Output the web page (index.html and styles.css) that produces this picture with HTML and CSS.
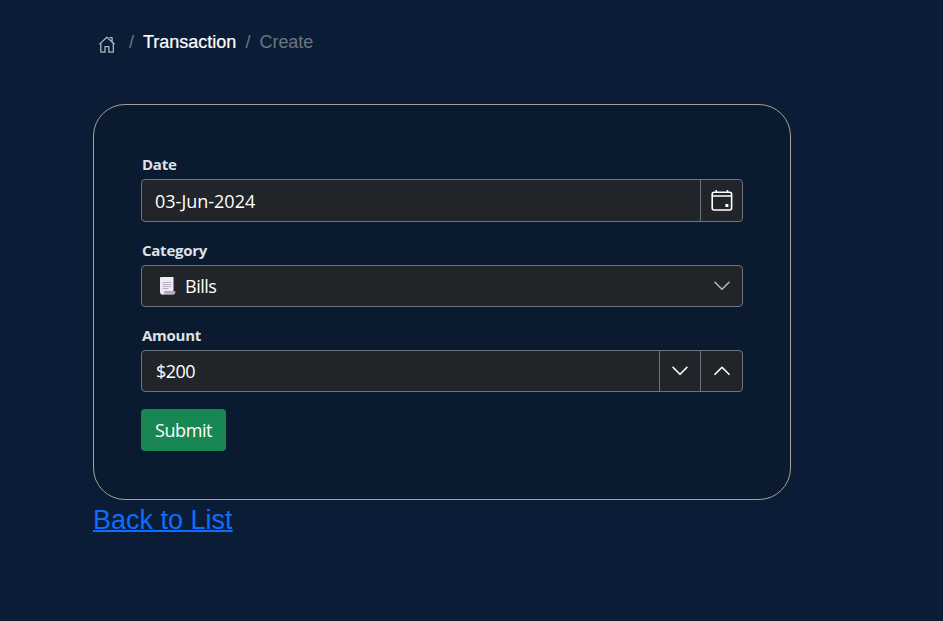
FILE: index.html
```html
<!DOCTYPE html>
<html lang="en">
<head>
<meta charset="utf-8">
<title>Create Transaction</title>
<link rel="stylesheet" href="styles.css">
</head>
<body>
<main class="page">
  <nav class="breadcrumb">
    <a class="home"><svg width="16" height="17" viewBox="0 0 16 17"><path d="M.8 7.9 7.9 1.2l7.3 6.7M1.8 7v9.2H6v-5.6h3.9v5.6h4.4V7M10.9 1.7h2.2v3.5" /></svg></a>
    <span class="slash">/</span>
    <span class="parent">Transaction</span>
    <span class="slash second">/</span>
    <span class="current">Create</span>
  </nav>
  <form class="card">
    <div class="field first">
      <label class="label">Date</label>
      <div class="control">
        <span class="value date">03-Jun-2024</span>
        <span class="addon"><svg width="22" height="22" viewBox="0 0 22 22"><rect x="1.2" y="2.2" width="19.4" height="17.8" rx="2"/><path d="M1.5 6h19M5.3.7v1.5M16.5.7v1.5"/><rect class="dot" x="14.4" y="14" width="3" height="3" rx=".5"/></svg></span>
      </div>
    </div>
    <div class="field">
      <label class="label">Category</label>
      <div class="control">
        <svg class="scroll" width="18" height="20" viewBox="0 0 18 20"><path fill="#f0e9f7" d="M1.5 1h13v14.5H5.2v3.2H4C2.2 18.7 1 17.6 1 16V2z"/><path fill="#b9adc5" d="M5 15.2h11.5c0 2.2-.9 3.5-2.7 3.5H4c1.3-.7 1-2 1-3.5z"/><path stroke="#b9afc4" d="M4 6.5h8M4 8.5h8M4 10.5h8M4 12.5h5"/></svg>
        <span class="value bills">Bills</span>
        <span class="addon plain muted"><svg width="16" height="10" viewBox="0 0 16 10"><path d="m1 1.3 7 7 7-7"/></svg></span>
      </div>
    </div>
    <div class="field">
      <label class="label amount-label">Amount</label>
      <div class="control">
        <span class="value amount">$200</span>
        <span class="addon narrow"><svg width="16" height="10" viewBox="0 0 16 10"><path d="m1 1.3 7 7 7-7"/></svg></span>
        <span class="addon"><svg width="16" height="10" viewBox="0 0 16 10"><path d="m1 8.3 7-7 7 7"/></svg></span>
      </div>
    </div>
    <button class="submit" type="button"><span>Submit</span></button>
  </form>
  <a class="back" href="#">Back to List</a>
</main>
</body>
</html>
```
FILE: styles.css
```css
* { box-sizing: border-box; }
body { margin: 0; min-height: 621px; background: #0b1d36; font-family: "Liberation Sans", sans-serif; }
.page { padding: 30px 0 0 93px; }
svg { fill: none; stroke: #fff; stroke-width: 1.6; stroke-linecap: round; stroke-linejoin: round; }
.breadcrumb { display: flex; height: 24px; padding-left: 5px; font-size: 18px; line-height: 24px; color: #6c757d; }
.home { display: flex; width: 31px; padding: 6px 0 0 .5px; }
.home svg { stroke: #adb5bd; stroke-width: 1.3; }
.slash { width: 14px; }
.parent { width: 102.5px; color: #fff; -webkit-text-stroke: .2px #fff; }
.second { width: 14px; }
.current { letter-spacing: -.05px; }
.card { display: flex; flex-direction: column; width: 698px; height: 396px; margin-top: 50px; padding: 50px 47px 0; border: 1px solid #a69f96; border-radius: 32px; background: #0a1a2f; font-family: "Open Sans", "Noto Sans", sans-serif; }
.field { height: 85px; }
.first { height: 86px; }
.label { display: block; height: 24px; padding-left: 1px; font-size: 15px; font-weight: 700; line-height: 18px; letter-spacing: -.25px; color: #dee2e6; }
.amount-label { line-height: 19px; }
.control { display: flex; align-items: center; width: 602px; height: 42px; border: 1px solid #6c757d; border-radius: 4px; background: #212529; }
.first .control { height: 43px; }
.value { flex: 1; padding-left: 13px; font-size: 18px; line-height: 40px; color: #fff; }
.date { letter-spacing: 0; }
.bills { padding-left: 8px; letter-spacing: -.5px; }
.amount { padding-left: 14px; letter-spacing: -.55px; }
.scroll { margin-left: 17px; stroke: none; stroke-width: 1; }
.addon { display: flex; width: 42px; height: 100%; align-items: center; justify-content: center; border-left: 1px solid #6c757d; }
.narrow { width: 41px; }
.plain { border-left-color: transparent; }
.muted svg { stroke: #adb5bd; }
.dot { fill: #fff; stroke: none; }
.submit { width: 85px; height: 42px; margin-top: -2px; padding: 0; border: 0; border-radius: 4px; background: #198754; color: #fff; font: 18px/42px "Open Sans", "Noto Sans", sans-serif; letter-spacing: -.4px; }
.back { display: inline-block; font-size: 27px; line-height: 41px; color: #0d6efd; text-decoration: underline; text-decoration-thickness: 2px; }
```
